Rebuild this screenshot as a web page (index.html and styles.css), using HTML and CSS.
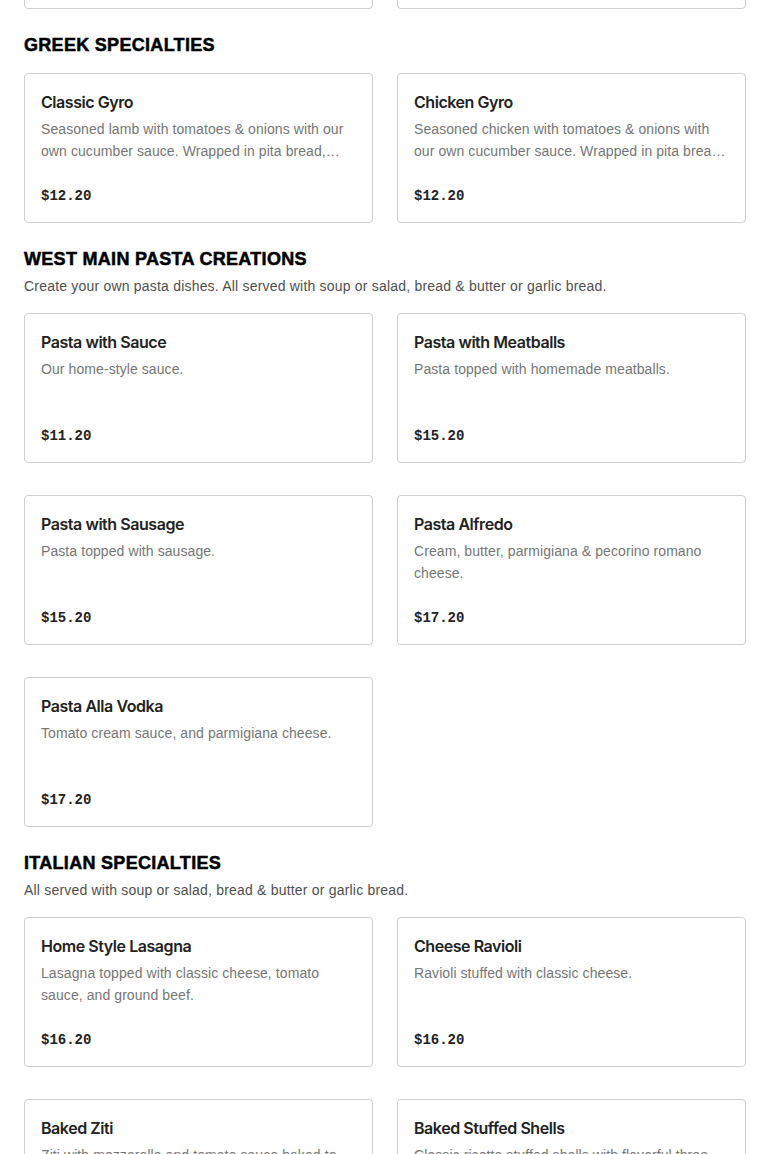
FILE: index.html
```html
<!DOCTYPE html>
<html lang="en">
<head>
<meta charset="utf-8">
<title>Menu</title>
<link rel="stylesheet" href="styles.css">
</head>
<body>
<main class="menu">
  <section class="menu-section">
    <h2 class="section-title">SUBS &amp; WRAPS</h2>
    <div class="item-grid">
      <article class="item-card">
        <h3 class="item-name">Italian Sub</h3>
        <p class="item-desc">Ham, salami, capicola and provolone with lettuce, tomatoes &amp; onions.</p>
        <p class="item-price">$12.20</p>
      </article>
      <article class="item-card">
        <h3 class="item-name">Chicken Wrap</h3>
        <p class="item-desc">Grilled chicken with lettuce, tomatoes &amp; cheese.</p>
        <p class="item-price">$12.20</p>
      </article>
    </div>
  </section>

  <section class="menu-section">
    <h2 class="section-title">GREEK SPECIALTIES</h2>
    <div class="item-grid">
      <article class="item-card">
        <h3 class="item-name">Classic Gyro</h3>
        <p class="item-desc">Seasoned lamb with tomatoes &amp; onions with our own cucumber sauce. Wrapped in pita bread, served with fries.</p>
        <p class="item-price">$12.20</p>
      </article>
      <article class="item-card">
        <h3 class="item-name">Chicken Gyro</h3>
        <p class="item-desc">Seasoned chicken with tomatoes &amp; onions with our own cucumber sauce. Wrapped in pita bread, served with fries.</p>
        <p class="item-price">$12.20</p>
      </article>
    </div>
  </section>

  <section class="menu-section">
    <h2 class="section-title">WEST MAIN PASTA CREATIONS</h2>
    <p class="section-desc">Create your own pasta dishes. All served with soup or salad, bread &amp; butter or garlic bread.</p>
    <div class="item-grid">
      <article class="item-card">
        <h3 class="item-name">Pasta with Sauce</h3>
        <p class="item-desc">Our home-style sauce.</p>
        <p class="item-price">$11.20</p>
      </article>
      <article class="item-card">
        <h3 class="item-name">Pasta with Meatballs</h3>
        <p class="item-desc">Pasta topped with homemade meatballs.</p>
        <p class="item-price">$15.20</p>
      </article>
      <article class="item-card">
        <h3 class="item-name">Pasta with Sausage</h3>
        <p class="item-desc">Pasta topped with sausage.</p>
        <p class="item-price">$15.20</p>
      </article>
      <article class="item-card">
        <h3 class="item-name">Pasta Alfredo</h3>
        <p class="item-desc">Cream, butter, parmigiana &amp; pecorino romano cheese.</p>
        <p class="item-price">$17.20</p>
      </article>
      <article class="item-card">
        <h3 class="item-name">Pasta Alla Vodka</h3>
        <p class="item-desc">Tomato cream sauce, and parmigiana cheese.</p>
        <p class="item-price">$17.20</p>
      </article>
    </div>
  </section>

  <section class="menu-section">
    <h2 class="section-title">ITALIAN SPECIALTIES</h2>
    <p class="section-desc">All served with soup or salad, bread &amp; butter or garlic bread.</p>
    <div class="item-grid">
      <article class="item-card">
        <h3 class="item-name">Home Style Lasagna</h3>
        <p class="item-desc">Lasagna topped with classic cheese, tomato sauce, and ground beef.</p>
        <p class="item-price">$16.20</p>
      </article>
      <article class="item-card">
        <h3 class="item-name">Cheese Ravioli</h3>
        <p class="item-desc">Ravioli stuffed with classic cheese.</p>
        <p class="item-price">$16.20</p>
      </article>
      <article class="item-card">
        <h3 class="item-name">Baked Ziti</h3>
        <p class="item-desc">Ziti with mozzarella and tomato sauce baked to perfection.</p>
        <p class="item-price">$16.20</p>
      </article>
      <article class="item-card">
        <h3 class="item-name">Baked Stuffed Shells</h3>
        <p class="item-desc">Classic ricotta stuffed shells with flavorful three cheese blend.</p>
        <p class="item-price">$16.20</p>
      </article>
    </div>
  </section>
</main>
</body>
</html>
```

FILE: styles.css
```css
* { box-sizing: border-box; }

html, body {
  margin: 0;
  padding: 0;
  background: #fff;
}

body {
  font-family: "Liberation Sans", Arial, sans-serif;
  color: #222;
  overflow: hidden;
}

.menu {
  padding: 0 24px;
  margin-top: -180px;
}

.menu-section + .menu-section {
  margin-top: 25px;
}

.section-title {
  margin: 0;
  font-family: "Liberation Sans", Arial, sans-serif;
  font-weight: 700;
  font-size: 18px;
  line-height: 22px;
  color: #000;
  letter-spacing: 0.3px;
  -webkit-text-stroke: 0.5px #000;
}

.section-desc {
  margin: 5px 0 0;
  font-size: 14px;
  line-height: 22px;
  letter-spacing: 0.2px;
  color: #4f4f4f;
}

.item-grid {
  margin-top: 17px;
  display: grid;
  grid-template-columns: 1fr 1fr;
  gap: 32px 24px;
}

.section-desc + .item-grid {
  margin-top: 16px;
}

.item-card {
  height: 150px;
  border: 1px solid #cfcfcf;
  border-radius: 4px;
  padding: 16px;
  display: flex;
  flex-direction: column;
}

.item-name {
  margin: 0;
  font-family: "Inter", "Liberation Sans", sans-serif;
  font-weight: 600;
  font-size: 16px;
  line-height: 24px;
  letter-spacing: -0.45px;
  color: #222;
}

.item-desc {
  margin: 4px 0 0;
  font-family: "Liberation Sans", Arial, sans-serif;
  font-size: 14px;
  line-height: 22px;
  letter-spacing: 0.08px;
  color: #767676;
  display: -webkit-box;
  -webkit-line-clamp: 2;
  -webkit-box-orient: vertical;
  overflow: hidden;
}

.item-price {
  margin: auto 0 0;
  font-family: "Liberation Mono", "Courier New", monospace;
  font-weight: 700;
  font-size: 14px;
  line-height: 20px;
  color: #222;
}
```
